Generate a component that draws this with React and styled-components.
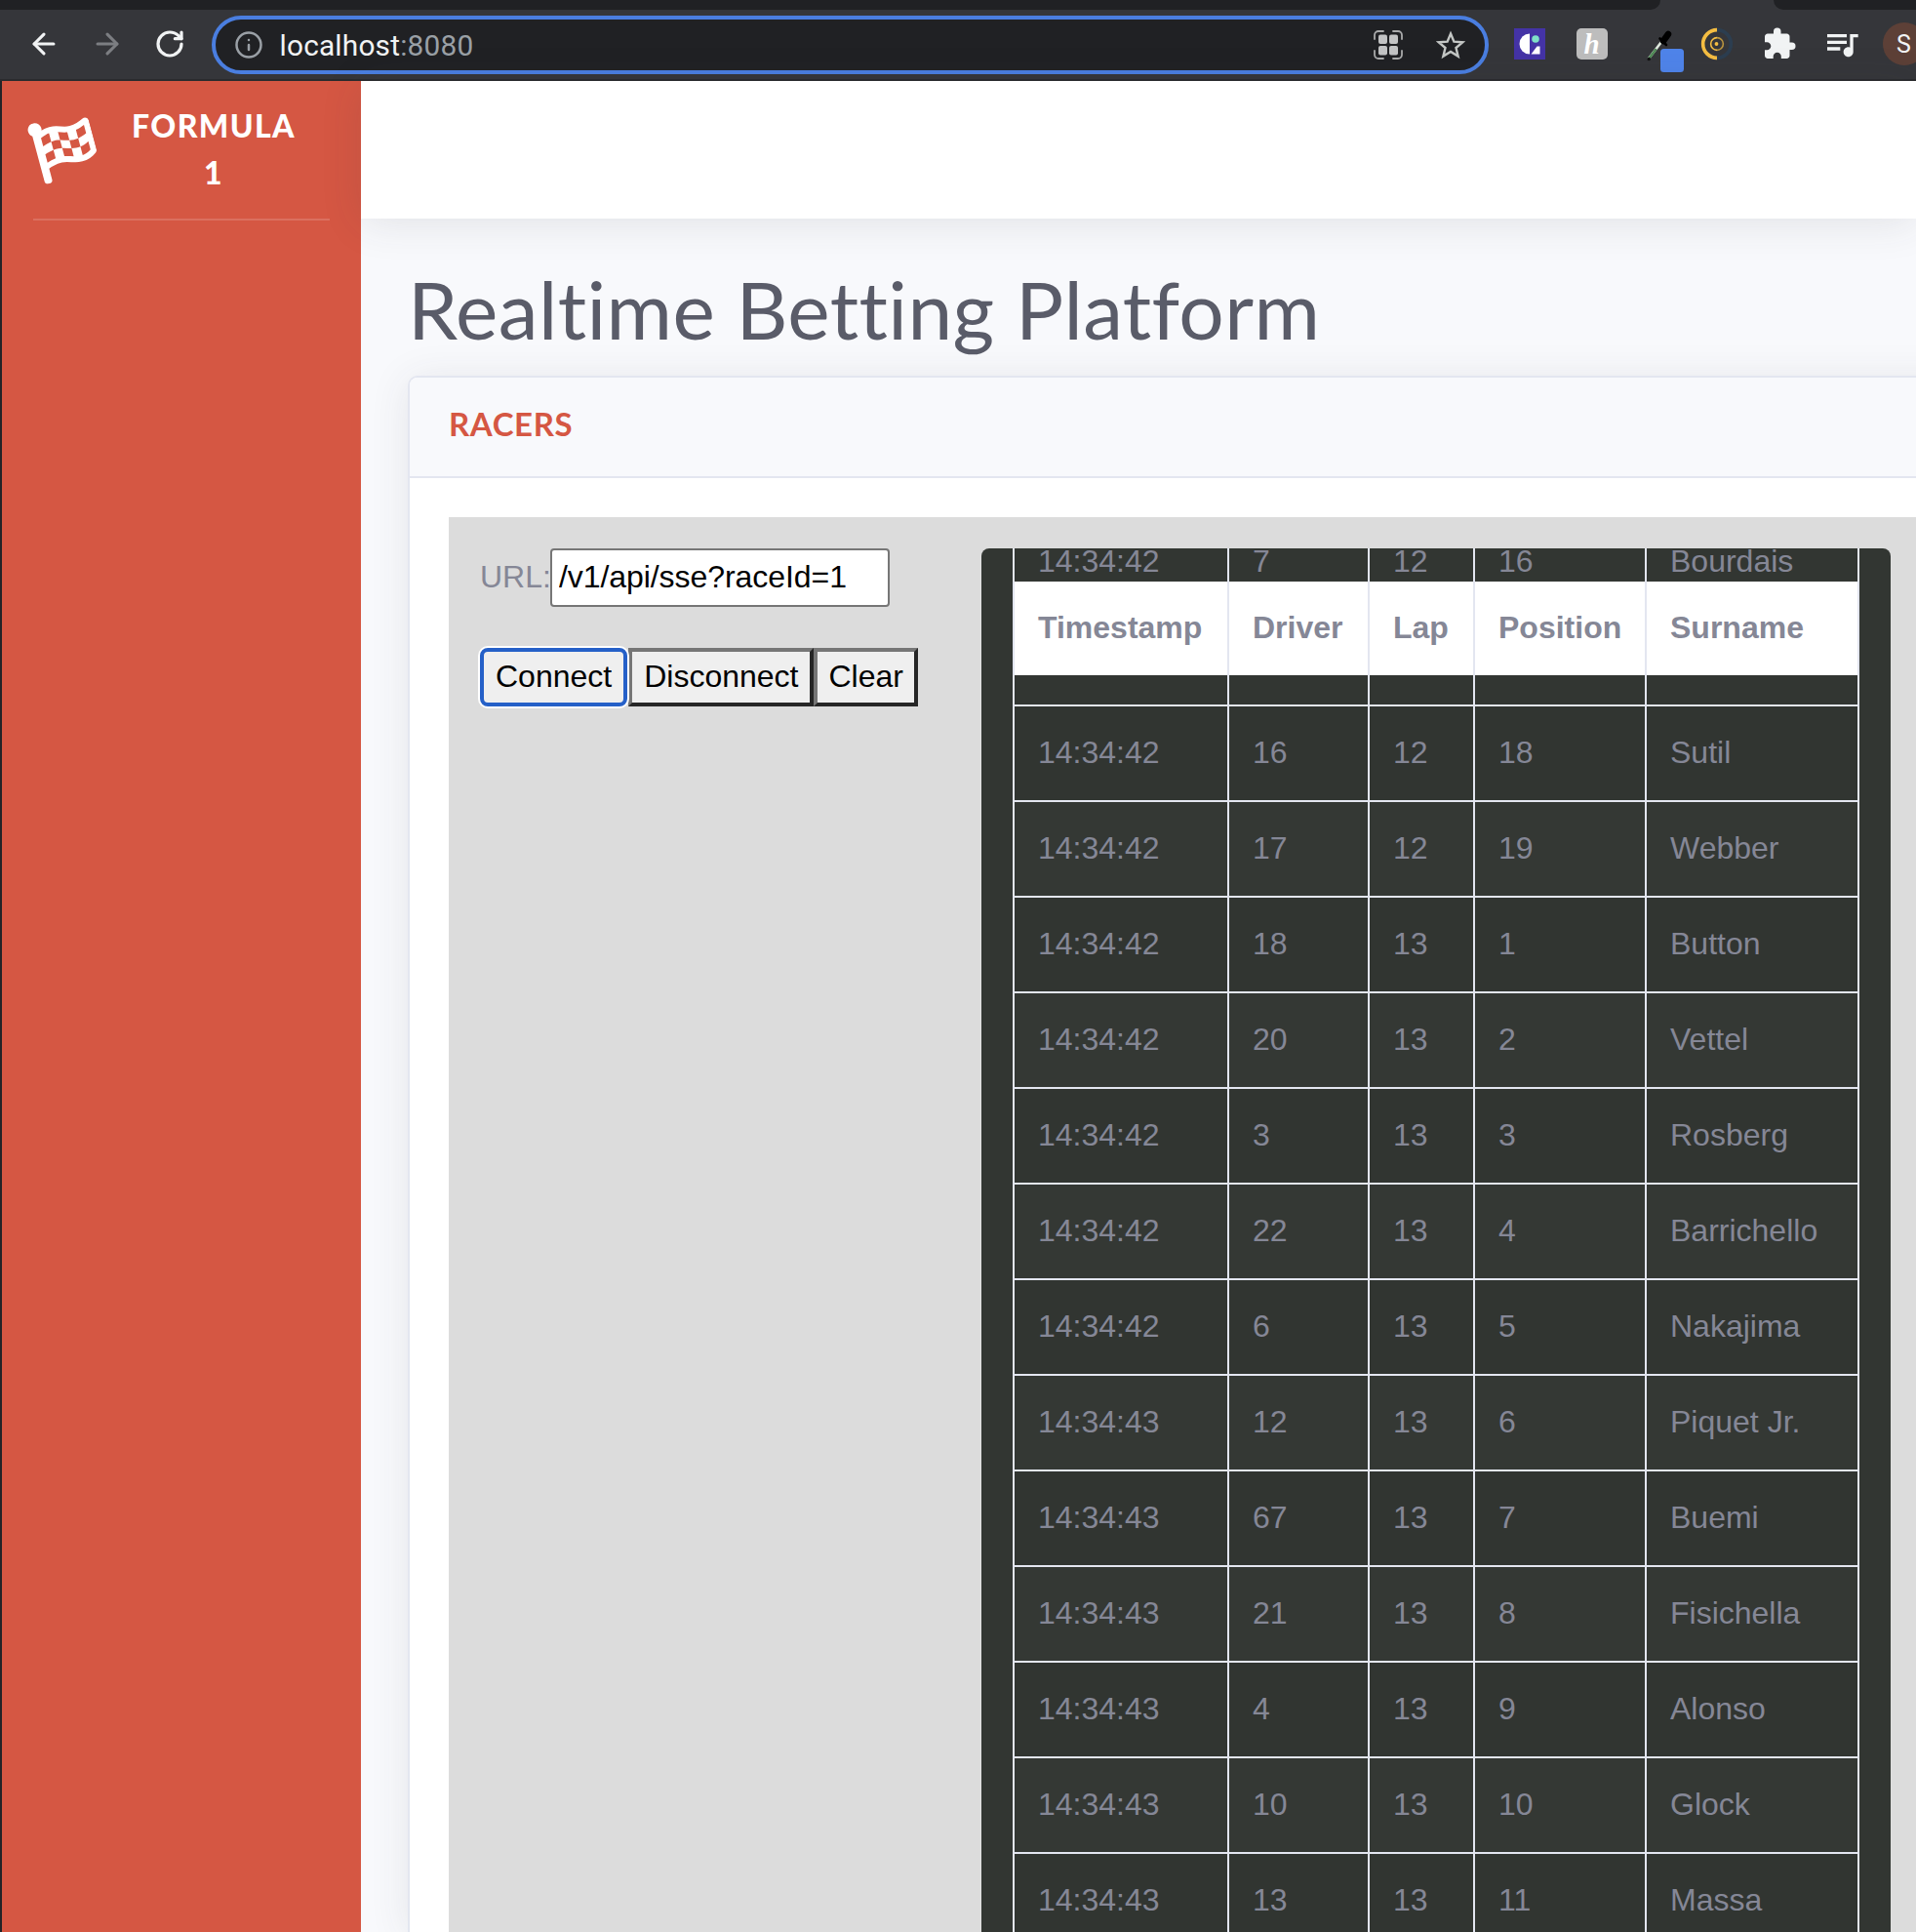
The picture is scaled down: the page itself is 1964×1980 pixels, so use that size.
import React from 'react';
import styled, { createGlobalStyle } from 'styled-components';
import { ArrowLeft, ArrowRight, RotateCw, Info } from 'lucide-react';
import { FaFlagCheckered } from 'react-icons/fa';
import { MdExtension, MdQueueMusic } from 'react-icons/md';

const Global = createGlobalStyle`
  html, body { margin: 0; padding: 0; width: 1964px; height: 1980px; overflow: hidden; background: #f8f9fc; }
  * { box-sizing: border-box; }
`;

const Page = styled.div`
  width: 1964px; height: 1980px; overflow: hidden;
  display: flex; flex-direction: column;
  font-family: Lato, "Noto Sans", sans-serif;
`;
const TabStrip = styled.div`
  height: 10px; flex: none; background: #35363a; display: flex; justify-content: space-between;
`;
const TabStripPart = styled.div`
  height: 10px; background: #202124;
  width: ${p => p.$width}px;
  border-radius: ${p => p.$side === 'left' ? '0 0 10px 0' : '0 0 0 10px'};
`;
const Toolbar = styled.div`
  height: 73px; flex: none; background: #35363a; border-bottom: 2px solid #2a2b2e;
  display: flex; align-items: center; padding-left: 13px; padding-bottom: 1px;
`;
const NavButton = styled.div`
  width: 64.5px; height: 48px; flex: none; display: flex; align-items: center; justify-content: center;
  color: ${p => p.$dim ? '#7c7e82' : '#f1f3f4'};
`;
const AddressBar = styled.div`
  margin-left: 10px; width: 1309px; height: 60px; flex: none;
  border: 4px solid #4a7ee0; border-radius: 30px; background: #202124;
  display: flex; align-items: center; padding: 0 15px 0 19px; margin-top: 1px;
`;
const UrlText = styled.div`
  margin-left: 17px; flex: 1; font-family: Roboto, sans-serif; font-size: 29.8px; color: #f1f3f4; letter-spacing: .2px;
  padding-top: 1px;
`;
const UrlPort = styled.span` color: #9aa0a6; `;
const BarIcon = styled.div`
  width: 40px; height: 40px; display: flex; align-items: center; justify-content: center; color: #c4c7c5;
  margin-left: ${p => p.$gap || 0}px;
`;
const ExtSlot = styled.div`
  width: 64px; height: 64px; flex: none; display: flex; align-items: center; justify-content: center;
  color: #f1f3f4; position: relative;
`;
const ExtGroup = styled.div`
  margin-left: 10px; display: flex; align-items: center;
`;
const HenryTile = styled.div`
  width: 32px; height: 32px; border-radius: 5px; background: #bdbdbd; color: #fff;
  display: flex; align-items: center; justify-content: center;
  font-family: "Liberation Serif", serif; font-style: italic; font-weight: 700; font-size: 29px; line-height: 1;
`;
const Avatar = styled.div`
  width: 44px; height: 44px; border-radius: 50%; background: #5d4037; color: #f1f3f4; flex: none;
  display: flex; align-items: center; justify-content: center;
  font-family: Roboto, sans-serif; font-size: 25px;
`;
const Body = styled.div`
  flex: 1; display: flex; min-height: 0; border-left: 2px solid #222327;
`;
const Sidebar = styled.aside`
  width: 368px; flex: none; background: #d55743;
`;
const Brand = styled.div`
  height: 141px; display: flex; align-items: center; padding: 0 0 0 31px; color: #fff;
`;
const BrandIcon = styled.div`
  width: 80px; flex: none; display: flex; transform: rotate(-15deg); font-size: 64px; line-height: 0;
  margin-top: -9px;
`;
const BrandText = styled.div`
  width: 180px; margin-left: 16px; text-align: center; font-weight: 900; font-size: 32px; line-height: 48px;
  letter-spacing: 1.4px; text-transform: uppercase; margin-top: -2px;
`;
const SideRule = styled.div`
  height: 2px; margin: 0 32px; background: rgba(255,255,255,.15);
`;
const Main = styled.main`
  flex: 1; min-width: 0; display: flex; flex-direction: column; background: #f8f9fc;
`;
const Topbar = styled.div`
  height: 141px; flex: none; background: #fff; box-shadow: 0 4px 40px rgba(58,59,69,.12); position: relative;
`;
const Content = styled.div`
  padding: 48px 0 0 48px; flex: 1; min-height: 0; display: flex; flex-direction: column;
`;
const Title = styled.h1`
  margin: 0 0 17px; font-size: 82px; line-height: 88px; padding-bottom: 8px; font-weight: 400; color: #5a5c69; white-space: nowrap;
  font-variant-ligatures: none; letter-spacing: .4px;
`;
const Card = styled.section`
  width: 1700px; flex: 1; min-height: 0; background: #fff; border: 2px solid #e3e6f0; border-right: 0; border-bottom: 0;
  border-radius: 10px 0 0 0; box-shadow: 0 4px 40px rgba(58,59,69,.1); display: flex; flex-direction: column;
`;
const CardHeader = styled.div`
  height: 103px; flex: none; background: #f8f9fc; border-bottom: 2px solid #e3e6f0; display: flex; align-items: center;
  padding: 0 40px 8px; border-radius: 8px 0 0 0;
`;
const CardTitle = styled.h6`
  margin: 0; font-size: 33px; font-weight: 700; color: #d55743; text-transform: uppercase; letter-spacing: .6px;
  font-variant-ligatures: none;
`;
const CardBody = styled.div`
  flex: 1; min-height: 0; padding: 40px 0 0 40px; display: flex;
`;
const Panel = styled.div`
  flex: 1; min-width: 0; background: #dcdcdc; display: flex; padding: 32px 0 0 32px;
  font-family: "Liberation Sans", Arial, sans-serif; font-size: 32px;
`;
const Controls = styled.div`
  width: 514px; flex: none;
`;
const UrlRow = styled.div`
  display: flex; align-items: center; height: 60px; margin-bottom: 42px; color: #858796;
`;
const UrlLabel = styled.span`
  margin-top: -2px;
`;
const UrlInput = styled.input`
  width: 348px; height: 60px; margin: 0 0 0 -1px; padding: 0 6px 2px 7px; font: inherit; color: #000; background: #fff;
  border: 2px solid #767676; border-radius: 4px; outline: none; letter-spacing: -.06px;
`;
const ButtonRow = styled.div`
  display: flex; align-items: center;
`;
const OutsetButton = styled.button`
  height: 60px; padding: 0 ${p => p.$pad}px 2px; margin: 0 0 0 ${p => p.$gap}px; font: inherit; color: #000; background: #efefef; cursor: default;
  border: 4px solid #767676; border-right-color: #262626; border-bottom-color: #262626; border-radius: 0; flex: none;
  ${p => p.$focused && `
    border: 4px solid #2560c8; border-radius: 8px; box-shadow: 0 0 0 2px #fff; position: relative;
  `}
`;
const TablePanel = styled.div`
  width: 932px; flex: none; background: #323632; border-radius: 8px 8px 0 0; padding-left: 32px; overflow: hidden;
`;
const RaceTable = styled.table`
  table-layout: fixed; width: 868px; border-collapse: separate; border-spacing: 0; color: #858796;
  font-size: 32px; line-height: 48px;
`;
const Cell = styled.td`
  padding: 0 24px 2px 24px; border-left: 2px solid #e3e6f0; vertical-align: middle; white-space: nowrap;
  box-sizing: border-box; height: 98px; border-top: 2px solid #e3e6f0;
  background: ${p => p.$odd ? '#313531' : '#343834'};
  &:last-child { border-right: 2px solid #e3e6f0; }
`;
const ClippedCell = styled(Cell)`
  height: 34px; border-top: 0; background: #323632; line-height: 26px; padding-bottom: 8px; padding-top: 0;
`;
const SpacerCell = styled(Cell)`
  height: 30px; border-top: 0; background: #323632; padding-bottom: 0;
`;
const HeadCell = styled.th`
  padding: 0 24px 2px 24px; height: 96px; background: #fff; border-left: 2px solid #e3e6f0; text-align: left;
  font-weight: 700; box-sizing: border-box; white-space: nowrap; color: #858796; vertical-align: middle;
  &:last-child { border-right: 2px solid #e3e6f0; }
`;
const DropperSvg = styled.svg`
  flex: none; margin: 16px 0 0 24px;
`;

const columns = ['Timestamp', 'Driver', 'Lap', 'Position', 'Surname'];
const widths = [220, 144, 108, 176, 220];
const rows = [
  ['14:34:42', '16', '12', '18', 'Sutil'],
  ['14:34:42', '17', '12', '19', 'Webber'],
  ['14:34:42', '18', '13', '1', 'Button'],
  ['14:34:42', '20', '13', '2', 'Vettel'],
  ['14:34:42', '3', '13', '3', 'Rosberg'],
  ['14:34:42', '22', '13', '4', 'Barrichello'],
  ['14:34:42', '6', '13', '5', 'Nakajima'],
  ['14:34:43', '12', '13', '6', 'Piquet Jr.'],
  ['14:34:43', '67', '13', '7', 'Buemi'],
  ['14:34:43', '21', '13', '8', 'Fisichella'],
  ['14:34:43', '4', '13', '9', 'Alonso'],
  ['14:34:43', '10', '13', '10', 'Glock'],
  ['14:34:43', '13', '13', '11', 'Massa'],
];

const LensIcon = () => (
  <svg width="32" height="32" viewBox="0 0 32 32" fill="none">
    <path d="M2 10V6a4 4 0 0 1 4-4h5M21 2h5a4 4 0 0 1 4 4v4M30 22v4a4 4 0 0 1-4 4h-5M11 30H6a4 4 0 0 1-4-4v-4" stroke="#a9aaab" strokeWidth="1.8" strokeLinecap="round" />
    <rect x="6" y="5.5" width="9" height="9.5" rx="2" fill="#c2c3c4" />
    <rect x="17" y="5.5" width="9" height="9.5" rx="2" fill="#c2c3c4" />
    <rect x="6" y="17" width="9" height="9.5" rx="2" fill="#c2c3c4" />
    <rect x="17" y="17" width="9" height="9.5" rx="2" fill="#c2c3c4" />
  </svg>
);
const StarIcon = () => (
  <svg width="30" height="30" viewBox="0 0 30 30" fill="none">
    <path d="M15 3.5l3.4 8.1 8.8.7-6.7 5.7 2.1 8.6L15 21.9l-7.6 4.7 2.1-8.6-6.7-5.7 8.8-.7z" stroke="#c4c7c5" strokeWidth="2.4" strokeLinejoin="miter" />
  </svg>
);
const ClockifyIcon = () => (
  <svg width="32" height="32" viewBox="0 0 32 32">
    <rect width="32" height="32" fill="#4433a6" />
    <path d="M16 5.5a10.5 10.5 0 1 0 0 21z" fill="#fff" />
    <circle cx="22" cy="11" r="3.8" fill="#7fe0c8" />
    <path d="M17.5 26.5h9v-8h-3z" fill="#fff" />
  </svg>
);
const DropperIcon = () => (
  <DropperSvg width="40" height="44" viewBox="0 0 40 44">
    <path d="M2 29 L15 12" stroke="#dfe9df" strokeWidth="2.6" strokeLinecap="round" />
    <path d="M3 28 L9 20" stroke="#4f8a55" strokeWidth="2.4" strokeLinecap="round" />
    <circle cx="2.2" cy="29.5" r="1.8" fill="#111" />
    <path d="M13.5 8.5 L20 15" stroke="#000" strokeWidth="2.6" strokeLinecap="round" />
    <path d="M17 11 L22 4" stroke="#000" strokeWidth="6.5" strokeLinecap="round" />
    <rect x="14" y="19" width="24" height="24" rx="3.5" fill="#4f84ea" />
  </DropperSvg>
);
const CoinIcon = () => (
  <svg width="34" height="34" viewBox="0 0 32 32" fill="none">
    <path d="M16 2.5a13.5 13.5 0 0 1 0 27" stroke="#2c3e50" strokeWidth="3.4" />
    <path d="M16 2.5a13.5 13.5 0 0 0 0 27" stroke="#f4bd42" strokeWidth="3.4" />
    <path d="M16 10a6 6 0 0 1 0 12" stroke="#f4bd42" strokeWidth="1.5" opacity=".7" />
    <path d="M16 10a6 6 0 0 0 0 12" stroke="#f4bd42" strokeWidth="1.5" />
    <circle cx="15.5" cy="16" r="1.8" fill="#f4bd42" />
  </svg>
);

export default function App() {
  return (
    <Page>
      <Global />
      <TabStrip>
        <TabStripPart $side="left" $width={1702} />
        <TabStripPart $side="right" $width={146} />
      </TabStrip>
      <Toolbar>
        <NavButton><ArrowLeft size={34} strokeWidth={2.2} /></NavButton>
        <NavButton $dim><ArrowRight size={34} strokeWidth={2.2} /></NavButton>
        <NavButton><RotateCw size={32} strokeWidth={2.4} /></NavButton>
        <AddressBar>
          <Info size={30} color="#9aa0a6" strokeWidth={2} />
          <UrlText>localhost<UrlPort>:8080</UrlPort></UrlText>
          <BarIcon><LensIcon /></BarIcon>
          <BarIcon $gap={24}><StarIcon /></BarIcon>
        </AddressBar>
        <ExtGroup>
          <ExtSlot><ClockifyIcon /></ExtSlot>
          <ExtSlot><HenryTile>h</HenryTile></ExtSlot>
          <ExtSlot><DropperIcon /></ExtSlot>
          <ExtSlot><CoinIcon /></ExtSlot>
          <ExtSlot><MdExtension size={36} /></ExtSlot>
          <ExtSlot><MdQueueMusic size={40} /></ExtSlot>
          <ExtSlot><Avatar>S</Avatar></ExtSlot>
        </ExtGroup>
      </Toolbar>
      <Body>
        <Sidebar>
          <Brand>
            <BrandIcon><FaFlagCheckered /></BrandIcon>
            <BrandText>Formula 1</BrandText>
          </Brand>
          <SideRule />
        </Sidebar>
        <Main>
          <Topbar />
          <Content>
            <Title>Realtime Betting Platform</Title>
            <Card>
              <CardHeader><CardTitle>Racers</CardTitle></CardHeader>
              <CardBody>
                <Panel>
                  <Controls>
                    <UrlRow>
                      <UrlLabel>URL:</UrlLabel>
                      <UrlInput readOnly value="/v1/api/sse?raceId=1" />
                    </UrlRow>
                    <ButtonRow>
                      <OutsetButton $focused $pad={12} $gap={0}>Connect</OutsetButton>
                      <OutsetButton $pad={12} $gap={1}>Disconnect</OutsetButton>
                      <OutsetButton $pad={11} $gap={0}>Clear</OutsetButton>
                    </ButtonRow>
                  </Controls>
                  <TablePanel>
                    <RaceTable>
                      <colgroup>
                        {widths.map((w, i) => <col key={i} width={w} />)}
                      </colgroup>
                      <tbody>
                        <tr>
                          {['14:34:42', '7', '12', '16', 'Bourdais'].map(v => <ClippedCell key={v}>{v}</ClippedCell>)}
                        </tr>
                        <tr>
                          {columns.map(c => <HeadCell key={c}>{c}</HeadCell>)}
                        </tr>
                        <tr>
                          {columns.map(c => <SpacerCell key={c} />)}
                        </tr>
                        {rows.map((r, i) => (
                          <tr key={i}>
                            {r.map((v, j) => <Cell key={j} $odd={i % 2 === 0}>{v}</Cell>)}
                          </tr>
                        ))}
                      </tbody>
                    </RaceTable>
                  </TablePanel>
                </Panel>
              </CardBody>
            </Card>
          </Content>
        </Main>
      </Body>
    </Page>
  );
}
